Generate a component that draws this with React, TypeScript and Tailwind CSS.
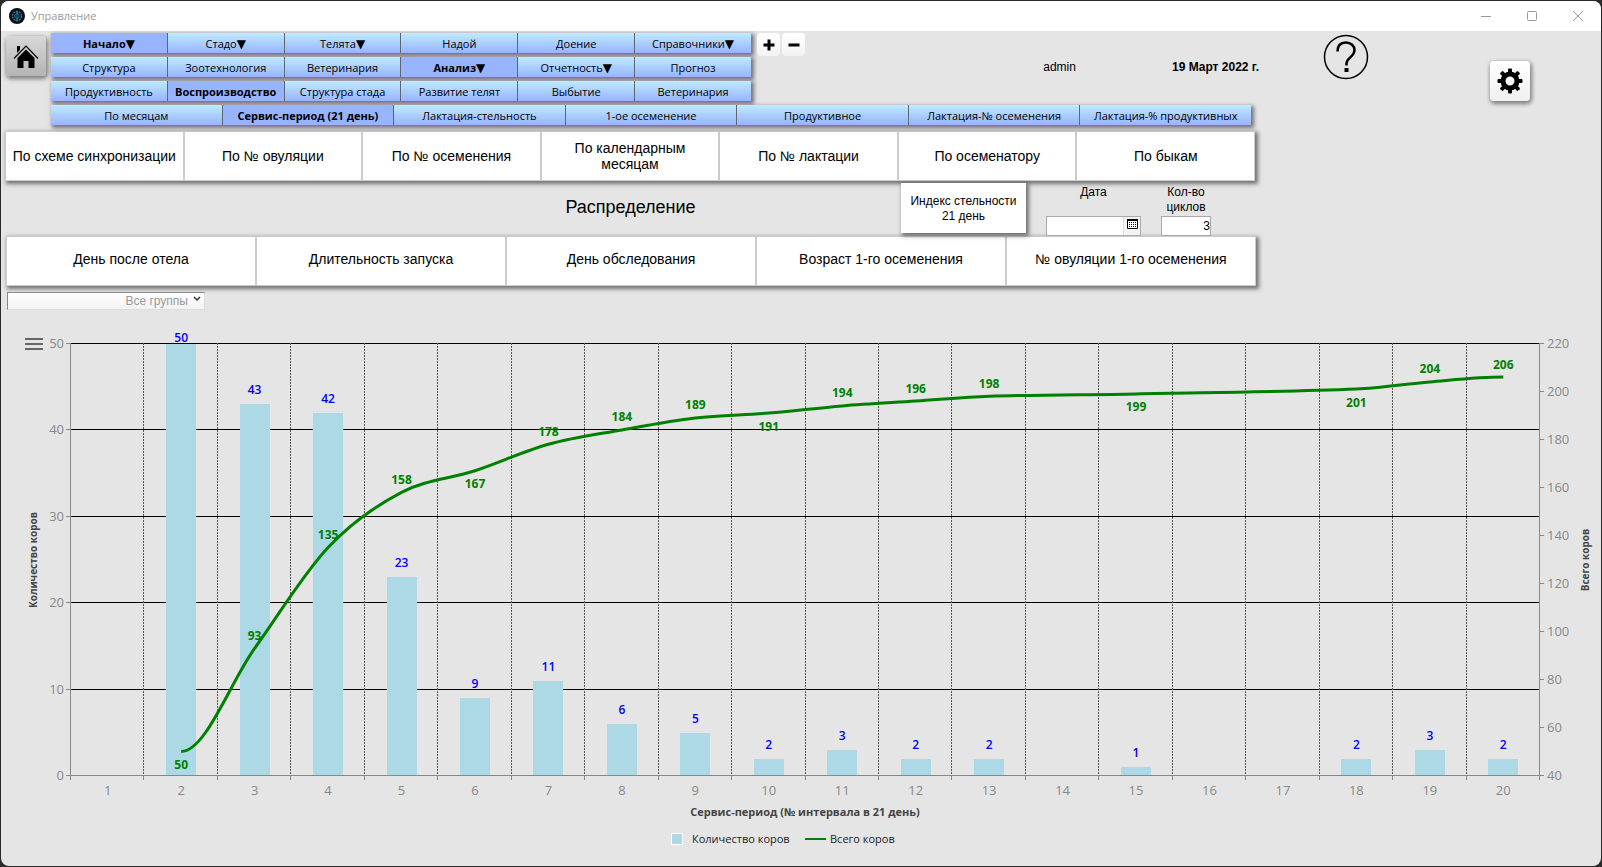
import { useState } from 'react'

const font = 'font-["Open_Sans","Noto_Sans",sans-serif]'

const menuRows = [
  ['Начало▼', 'Стадо▼', 'Телята▼', 'Надой', 'Доение', 'Справочники▼'],
  ['Структура', 'Зоотехнология', 'Ветеринария', 'Анализ▼', 'Отчетность▼', 'Прогноз'],
  ['Продуктивность', 'Воспроизводство', 'Структура стада', 'Развитие телят', 'Выбытие', 'Ветеринария'],
]

const reports = [
  'По месяцам',
  'Сервис-период (21 день)',
  'Лактация-стельность',
  '1-ое осеменение',
  'Продуктивное',
  'Лактация-№ осеменения',
  'Лактация-% продуктивных',
]

const groupings = [
  'По схеме синхронизации',
  'По № овуляции',
  'По № осеменения',
  'По календарным месяцам',
  'По № лактации',
  'По осеменатору',
  'По быкам',
]

const distributions = [
  'День после отела',
  'Длительность запуска',
  'День обследования',
  'Возраст 1-го осеменения',
  '№ овуляции 1-го осеменения',
]

// interval, cows in interval, running total, label under the line
const data: [number, number, number, boolean][] = [
  [2, 50, 50, true],
  [3, 43, 93, false],
  [4, 42, 135, false],
  [5, 23, 158, false],
  [6, 9, 167, true],
  [7, 11, 178, false],
  [8, 6, 184, false],
  [9, 5, 189, false],
  [10, 2, 191, true],
  [11, 3, 194, false],
  [12, 2, 196, false],
  [13, 2, 198, false],
  [15, 1, 199, true],
  [18, 2, 201, true],
  [19, 3, 204, false],
  [20, 2, 206, false],
]

const LEFT = 69
const RIGHT = 1538
const TOP = 30
const BOTTOM = 462
const STEP = (RIGHT - LEFT) / 20

const catX = (n: number) => LEFT + 1 + STEP * (n - 0.5)
const countY = (v: number) => BOTTOM - (v / 50) * (BOTTOM - TOP)
const totalY = (v: number) => BOTTOM - ((v - 40) / 180) * (BOTTOM - TOP)

function linePath() {
  const pts = data.map(([n, , total]) => ({ x: catX(n), y: totalY(total) + 0.5 }))
  const slopes = pts.map((_, i) => {
    if (i === 0 || i === pts.length - 1) return 0
    return (pts[i + 1].y - pts[i - 1].y) / (pts[i + 1].x - pts[i - 1].x)
  })
  let d = `M${pts[0].x} ${pts[0].y}`
  for (let i = 1; i < pts.length; i++) {
    const a = pts[i - 1]
    const b = pts[i]
    const h = (b.x - a.x) / 3
    d += ` C${a.x + h} ${a.y + slopes[i - 1] * h} ${b.x - h} ${b.y - slopes[i] * h} ${b.x} ${b.y}`
  }
  return d
}

function MenuRow({ items, active, onSelect }: { items: string[]; active: string; onSelect: (s: string) => void }) {
  return (
    <div className="flex h-5 shadow-[2px_2px_4px_1px_rgba(0,0,0,0.5)]">
      {items.map((item) => (
        <button
          key={item}
          onClick={() => onSelect(item)}
          className={`flex flex-1 basis-0 items-center justify-center whitespace-nowrap border-r border-[#5f6670] pt-0.5 text-[11px] leading-[18px] last:border-r-0 ${
            item === active ? 'bg-[#99b4ff] font-bold' : 'bg-linear-to-b from-[#bfeaff] to-[#99b4ff]'
          }`}
        >
          {item.replace('▼', '')}
          {item.endsWith('▼') && <span className="font-['DejaVu_Sans',sans-serif] text-xs font-normal leading-[18px]">▼</span>}
        </button>
      ))}
    </div>
  )
}

function ButtonRow({ items, className = '' }: { items: string[]; className?: string }) {
  return (
    <div className="flex h-[50px] w-[1250px] border border-[#ccc] bg-white font-['Liberation_Sans',sans-serif] text-sm leading-4 shadow-[2px_2px_4px_1px_rgba(0,0,0,0.5)]">
      {items.map((item) => (
        <button key={item} className={`flex-1 basis-0 border-r-2 border-[#ccc] px-1 last:border-r-0 ${className}`}>
          {item}
        </button>
      ))}
    </div>
  )
}

function Chart() {
  const intervals = Array.from({ length: 20 }, (_, i) => i + 1)
  return (
    <svg viewBox="0 0 1600 553" className={`mt-[3px] block w-full ${font}`}>
      {/* Menu */}
      <path d="M24 26h18M24 31h18M24 36h18" stroke="#666" strokeWidth="2" />

      {/* Grid */}
      {[10, 20, 30, 40, 50].map((v) => (
        <line key={v} x1={LEFT} x2={RIGHT} y1={Math.round(countY(v)) + 0.5} y2={Math.round(countY(v)) + 0.5} stroke="#000" />
      ))}
      {intervals.slice(0, 19).map((n) => {
        const x = Math.round(LEFT + STEP * n) + 0.5
        return <line key={n} x1={x} x2={x} y1={TOP} y2={BOTTOM} stroke="#555" strokeDasharray="2 1" />
      })}

      {/* Bars */}
      {data.map(([n, count]) => (
        <rect
          key={n}
          x={Math.round(catX(n) - 15)}
          y={Math.round(countY(count)) + 1}
          width="30"
          height={BOTTOM - Math.round(countY(count)) - 1}
          fill="#add8e6"
        />
      ))}

      {/* Axes */}
      <g stroke="#888" fill="none">
        <path d={`M${LEFT + 0.5} ${TOP}V${BOTTOM + 5}M${RIGHT + 0.5} ${TOP}V${BOTTOM + 5}M${LEFT} ${BOTTOM + 0.5}H${RIGHT}`} />
        {intervals.slice(0, 19).map((n) => (
          <path key={n} d={`M${Math.round(LEFT + STEP * n) + 0.5} ${BOTTOM}v5`} />
        ))}
        {[0, 10, 20, 30, 40, 50].map((v) => (
          <path key={v} d={`M${LEFT - 4} ${Math.round(countY(v)) + 0.5}h4`} />
        ))}
        {[40, 60, 80, 100, 120, 140, 160, 180, 200, 220].map((v) => (
          <path key={v} d={`M${RIGHT} ${Math.round(totalY(v)) + 0.5}h5`} />
        ))}
      </g>
      <g fill="#888" fontSize="13">
        {[0, 10, 20, 30, 40, 50].map((v) => (
          <text key={v} x={LEFT - 6} y={Math.round(countY(v)) + 5} textAnchor="end">{v}</text>
        ))}
        {[40, 60, 80, 100, 120, 140, 160, 180, 200, 220].map((v) => (
          <text key={v} x={RIGHT + 8} y={Math.round(totalY(v)) + 5}>{v}</text>
        ))}
        {intervals.map((n) => (
          <text key={n} x={catX(n)} y={BOTTOM + 20} textAnchor="middle">{n}</text>
        ))}
      </g>

      {/* Running total */}
      <path d={linePath()} fill="none" stroke="#008000" strokeWidth="3" />
      <g fill="#0000ff" fontSize="12" fontWeight="600" textAnchor="middle">
        {data.map(([n, count]) => (
          <text key={n} x={catX(n)} y={count === 50 ? TOP - 1 : Math.round(countY(count)) - 9}>{count}</text>
        ))}
      </g>
      <g fill="#008000" fontSize="12" fontWeight="700" textAnchor="middle">
        {data.map(([n, , total, below]) => (
          <text key={n} x={catX(n)} y={Math.round(totalY(total)) + (below ? 18 : -8)}>{total}</text>
        ))}
      </g>

      {/* Titles */}
      <g fill="#444" fontWeight="700" textAnchor="middle">
        <text fontSize="10" transform="translate(36 247) rotate(-90)">Количество коров</text>
        <text fontSize="10" transform="translate(1588 247) rotate(-90)">Всего коров</text>
        <text fontSize="11" x="804" y="503">Сервис-период (№ интервала в 21 день)</text>
      </g>

      {/* Legend */}
      <rect x="670.5" y="520.5" width="11" height="11" fill="#add8e6" stroke="#fff" />
      <path d="M804 526h21" stroke="#008000" strokeWidth="2" />
      <g fill="#222" fontSize="11">
        <text x="691" y="530">Количество коров</text>
        <text x="829" y="530">Всего коров</text>
      </g>
    </svg>
  )
}

export default function App() {
  const [active, setActive] = useState(['Начало▼', 'Анализ▼', 'Воспроизводство'])
  const [report, setReport] = useState('Сервис-период (21 день)')

  return (
    <div className="min-h-screen bg-[#2b2b2b] p-px">
      <div className="overflow-hidden rounded-lg bg-[#e5e5e5] text-black">
        {/* Title bar */}
        <header className={`flex h-[30px] items-center bg-white pl-2 text-[11px] text-[#999] ${font}`}>
          <svg className="mr-1.5 size-4" viewBox="0 0 16 16" fill="none">
            <circle cx="8" cy="8" r="8" fill="#0a0f14" />
            <circle cx="8" cy="8" r="4.5" stroke="#2a8095" strokeWidth="1.4" strokeDasharray="2 0.8" />
            <path d="M8 2.5v11M5.5 8L8 5l2.5 3L8 11z" stroke="#2a8095" />
          </svg>
          <span className="flex-1">Управление</span>
          <div className="flex items-center gap-9 pr-[18px]">
            <button aria-label="Свернуть">
              <svg className="size-2.5" viewBox="0 0 10 10"><path d="M0 5.5h10" stroke="#999" /></svg>
            </button>
            <button aria-label="Развернуть">
              <svg className="size-2.5" viewBox="0 0 10 10"><rect x="0.5" y="0.5" width="9" height="9" rx="1" fill="none" stroke="#999" /></svg>
            </button>
            <button aria-label="Закрыть">
              <svg className="size-2.5" viewBox="0 0 10 10"><path d="M0 0l10 10M10 0L0 10" stroke="#999" /></svg>
            </button>
          </div>
        </header>

        {/* Navigation */}
        <div className="flex items-start pl-[5px] pt-0.5">
          <button
            aria-label="Домой"
            className="mr-[5px] mt-[3px] flex size-10 items-center justify-center rounded-sm bg-linear-to-b from-[#d8d8d8] to-[#b4b4b4] shadow-[1px_2px_4px_1px_rgba(0,0,0,0.45)]"
          >
            <svg className="size-[26px]" viewBox="0 0 26 26">
              <path d="M13 6.5L4.500 15v10h6v-7h5v7h6V15z" />
              <path d="M1 15.500L13 3l12 12.500" fill="none" stroke="#000" strokeWidth="1.200" />
              <path d="M4 3h3v4l-3 3z" />
            </svg>
          </button>
          <nav className={`flex w-[1200px] flex-col gap-1 ${font}`}>
            <div className="flex">
              <div className="flex w-[700px] flex-col gap-1">
                {menuRows.map((row, i) => (
                  <MenuRow
                    key={i}
                    items={row}
                    active={active[i]}
                    onSelect={(s) => setActive(active.map((a, j) => (j === i ? s : a)))}
                  />
                ))}
              </div>
              <div className="ml-1.5 flex gap-0.5">
                <button aria-label="Добавить" className="flex size-[23px] items-center justify-center rounded-sm bg-linear-to-b from-white to-[#f2f2f2]">
                  <svg className="size-3" viewBox="0 0 12 12"><path d="M6 0.500v11M0.500 6h11" stroke="#000" strokeWidth="3" /></svg>
                </button>
                <button aria-label="Убрать" className="flex size-[23px] items-center justify-center rounded-sm bg-linear-to-b from-white to-[#f2f2f2]">
                  <svg className="size-3" viewBox="0 0 12 12"><path d="M0.500 6h11" stroke="#000" strokeWidth="3" /></svg>
                </button>
              </div>
              <div className="ml-auto flex gap-24 pt-[26px] font-['Liberation_Sans',sans-serif] text-xs">
                <span>admin</span>
                <span className="-mr-2 whitespace-nowrap font-bold">19 Март 2022 г.</span>
              </div>
            </div>
            <MenuRow items={reports} active={report} onSelect={setReport} />
          </nav>
          <button aria-label="Справка" className="ml-[72px] mt-px">
            <svg className="size-[46px]" viewBox="0 0 46 46" fill="none" stroke="#000">
              <circle cx="23" cy="23" r="21.500" strokeWidth="1.500" />
              <path d="M14.500 17.500C14.500 11 18 8.500 23 8.500s8.500 3.500 8.500 7.500c0 7-8 7.500-8 13.500v2" strokeWidth="2.500" />
              <rect x="21.500" y="34" width="4" height="4" fill="#000" stroke="none" />
            </svg>
          </button>
          <button
            aria-label="Настройки"
            className="ml-auto mr-[71px] mt-7 flex size-10 items-center justify-center rounded-sm bg-linear-to-b from-white to-[#f0f0f0] shadow-[1px_2px_4px_1px_rgba(0,0,0,0.45)]"
          >
            <svg className="size-[26px]" viewBox="-13 -13 26 26">
              <circle r="7" fill="none" stroke="#000" strokeWidth="5" />
              {[0, 45, 90, 135, 180, 225, 270, 315].map((a) => (
                <rect key={a} x="-2" y="-12.500" width="4" height="6" rx="1" transform={`rotate(${a})`} />
              ))}
            </svg>
          </button>
        </div>

        {/* Groupings */}
        <div className="pl-1 pt-1.5">
          <ButtonRow items={groupings} />
          <div className="ml-px flex h-[55px] w-[1250px] items-start font-['Liberation_Sans',sans-serif] text-xs leading-[15px]">
            <h1 className="flex-1 pl-[354px] pt-3 text-center text-lg">Распределение</h1>
            <button className="relative mt-0.5 h-[50px] w-[125px] bg-white px-2 pt-0.5 shadow-[2px_2px_4px_1px_rgba(0,0,0,0.5)]">
              Индекс стельности 21 день
            </button>
            <div className="ml-5 flex h-full w-[95px] flex-col pt-1">
              <label htmlFor="date" className="flex-1 text-center">Дата</label>
              <div className="flex h-5 border border-[#aaa] bg-white">
                <input id="date" type="text" className="min-w-0 flex-1 px-1 outline-none" />
                <button aria-label="Календарь" className="flex w-[17px] justify-center border-l border-[#ddd] bg-[#f4f4f4] pt-0.5">
                  <svg className="h-2.5 w-[11px]" viewBox="0 0 11 10">
                    <path d="M0.500 0.500h10v9h-10z" fill="#fff" stroke="#000" />
                    <path d="M0 1h11" stroke="#000" strokeWidth="2" />
                    <path d="M2 3.500h7M2 5.500h7M2 7.500h7" stroke="#000" strokeDasharray="1 1" />
                  </svg>
                </button>
              </div>
            </div>
            <div className="ml-5 mr-[45px] flex h-full w-[50px] flex-col pt-1">
              <label htmlFor="cycles" className="flex-1 text-center">Кол-во циклов</label>
              <input id="cycles" type="text" defaultValue="3" className="h-5 w-full border border-[#aaa] bg-white text-right outline-none" />
            </div>
          </div>
          <div className="ml-px">
            <ButtonRow items={distributions} className="pb-1" />
          </div>
        </div>

        <div className="relative ml-1.5 mt-1.5 w-[198px]">
          <select
            aria-label="Группа"
            className="block h-[18px] w-full appearance-none border border-b-[#ddd] border-l-[#888] border-r-[#ddd] border-t-[#888] bg-linear-to-b from-white to-[#f2f2f2] pr-4 text-right font-['Liberation_Sans',sans-serif] text-xs leading-4 text-[#999] [text-align-last:right]"
          >
            <option>Все группы</option>
          </select>
          <svg className="pointer-events-none absolute right-1 top-1 h-1.5 w-2" viewBox="0 0 8 6">
            <path d="M1 1l3 3 3-3" fill="none" stroke="#333" strokeWidth="1.500" />
          </svg>
        </div>

        <Chart />
      </div>
    </div>
  )
}
